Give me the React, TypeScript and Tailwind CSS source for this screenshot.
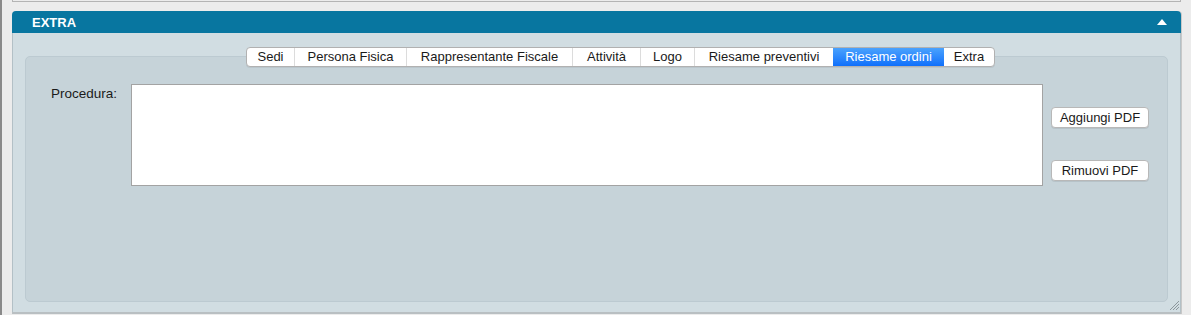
import React from "react";

const tabs: { label: string; w: number; active?: boolean }[] = [
  { label: "Sedi", w: 48 },
  { label: "Persona Fisica", w: 112 },
  { label: "Rappresentante Fiscale", w: 166 },
  { label: "Attività", w: 68 },
  { label: "Logo", w: 54 },
  { label: "Riesame preventivi", w: 138 },
  { label: "Riesame ordini", w: 111, active: true },
  { label: "Extra", w: 50 },
];

export default function App() {
  return (
    <div
      className="w-[1191px] h-[315px] bg-[#ececec] flex overflow-hidden"
      style={{ fontFamily: '"Liberation Sans", Arial, sans-serif' }}
    >
      <div className="w-[2px] h-full bg-[#8a8a8a]" />
      <div className="flex flex-col pl-[10px] w-[1181px]">
        <div className="h-[2px] w-[1169px] border-l border-r border-b border-[#b4b4b4]" />
        <div className="mt-[9px] w-[1169px] h-[303px] flex flex-col relative rounded-t-[4px] border-b-2 border-[#b9bfc2] shadow-[1px_0_0_#c8c8c8]">
          <div className="h-[22px] bg-[#0876a0] rounded-t-[4px] flex items-center justify-between pl-[20px] pr-[14px]">
            <span className="text-white font-bold text-[13px] leading-none">EXTRA</span>
            <svg width="10" height="6" viewBox="0 0 10 6">
              <polygon points="0,6 10,6 5,0" fill="#ffffff" />
            </svg>
          </div>
          <div className="flex-1 bg-[#d1dde2] border-l border-r border-[#b3c0c6] pt-[14px] px-[12px] pb-[10px] flex flex-col">
            <div className="relative z-10 pl-[221px] flex">
              <div className="flex h-[20px] bg-white border border-[#b1b1b1] rounded-[4px] overflow-hidden shadow-[0_1px_0_rgba(0,0,0,0.06)]">
                {tabs.map((t, i) => (
                  <div
                    key={t.label}
                    style={{ width: t.w }}
                    className={
                      t.active
                        ? "h-full flex items-center justify-center text-[13px] text-white bg-gradient-to-b from-[#4aa2fd] to-[#0e6ffb]"
                        : i < tabs.length - 1 && !tabs[i + 1].active
                        ? "h-full flex items-center justify-center text-[13px] text-[#1a1a1a] border-r border-[#dcdcdc]"
                        : "h-full flex items-center justify-center text-[13px] text-[#1a1a1a]"
                    }
                  >
                    {t.label}
                  </div>
                ))}
              </div>
            </div>
            <div className="-mt-[11px] flex-1 bg-[#c6d3d9] border border-[#bccad1] rounded-[5px] flex pt-[27px]">
              <div className="w-[105px] pr-[14px] text-right text-[13.5px] text-[#1a1a1a] leading-[16px] pt-[2px]">
                Procedura:
              </div>
              <div className="w-[912px] h-[102px] bg-white border border-[#a3a3a3]" />
              <div className="ml-[8px] flex flex-col pt-[23px]">
                <button className="w-[98px] h-[21px] bg-white border border-[#b8b8b8] rounded-[4px] text-[13px] text-[#1a1a1a] shadow-[0_1px_0_rgba(0,0,0,0.08)]">
                  Aggiungi PDF
                </button>
                <button className="mt-[32px] w-[98px] h-[21px] bg-white border border-[#b8b8b8] rounded-[4px] text-[13px] text-[#1a1a1a] shadow-[0_1px_0_rgba(0,0,0,0.08)]">
                  Rimuovi PDF
                </button>
              </div>
            </div>
          </div>
          <svg className="absolute right-[2px] bottom-[2px]" width="10" height="10" viewBox="0 0 10 10">
            <line x1="1" y1="10" x2="10" y2="1" stroke="#8c979c" strokeWidth="1" />
            <line x1="4" y1="10" x2="10" y2="4" stroke="#8c979c" strokeWidth="1" />
            <line x1="7" y1="10" x2="10" y2="7" stroke="#8c979c" strokeWidth="1" />
          </svg>
        </div>
      </div>
    </div>
  );
}
